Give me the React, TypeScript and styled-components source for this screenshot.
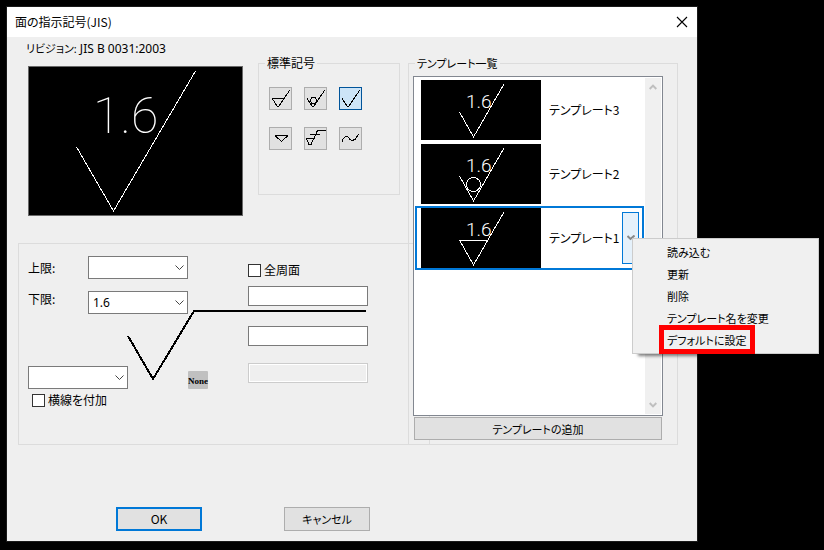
import React, { useState } from "react";
import styled, { createGlobalStyle } from "styled-components";

const Global = createGlobalStyle`
  * { box-sizing: border-box; }
  body {
    margin: 0;
    background: #000;
    color: #000;
    font-family: "Noto Sans CJK JP", sans-serif;
    font-size: 12px;
    line-height: 16px;
    font-feature-settings: "palt";
  }
  button, input, select { font: inherit; color: inherit; font-feature-settings: inherit; margin: 0; }
`;

const Page = styled.main`
  padding: 7px 127px 9px 7px;
`;

const Dialog = styled.section`
  background: #efefef;
  box-shadow: 0 0 0 1px #1a1a1a;
`;

const TitleBar = styled.header`
  display: flex;
  align-items: center;
  justify-content: space-between;
  height: 30px;
  padding: 0 7px 0 8px;
  background: #fff;
`;

const Title = styled.h1`
  margin: 0;
  font-size: 12px;
  font-weight: 400;
`;

const CloseButton = styled.button`
  display: grid;
  place-items: center;
  width: 16px;
  height: 16px;
  padding: 0;
  border: 0;
  background: none;
`;

const Body = styled.div`
  padding: 4px 19px 10px 11px;
`;

const Columns = styled.div`
  display: grid;
  grid-template-columns: minmax(0, 1fr) 270px;
`;

const MainColumn = styled.div`
  display: flex;
  flex-direction: column;
  gap: 27px;
`;

const TopRow = styled.div`
  display: flex;
  align-items: flex-start;
  justify-content: space-between;
  padding: 0 8px 0 10px;
`;

const PreviewBlock = styled.div`
  display: flex;
  flex-direction: column;
  gap: 9px;
`;

const Revision = styled.div`
  height: 16px;
  margin-left: -2px;
  font-family: "Noto Sans", "Noto Sans CJK JP", sans-serif;
`;

const RevisionName = styled.span`
  font-size: 11px;
`;

const Preview = styled.svg`
  display: block;
  width: 215px;
  height: 150px;
  background: #000;
  border: 1px solid #696969;
`;

const SymbolValue = styled.text<{ $small?: boolean }>`
  fill: #fff;
  font-family: Roboto, "Noto Sans CJK JP", sans-serif;
  font-size: ${(p) => (p.$small ? "19px" : "50px")};
  font-weight: ${(p) => (p.$small ? 300 : 100)};
`;

const Group = styled.fieldset`
  min-width: 0;
  margin: 14px 0 0;
  border: 1px solid #dcdcdc;
`;

const Legend = styled.legend<{ $small?: boolean }>`
  padding: 0 2px;
  font-size: ${(p) => (p.$small ? "11px" : "12px")};
`;

const SymbolGroup = styled(Group)`
  width: 142px;
  height: 140px;
  padding: 16px 10px;
  legend { margin-left: -4px; }
`;

const SymbolGrid = styled.div`
  display: grid;
  grid-template-columns: repeat(3, 23px);
  gap: 17px 12px;
`;

const IconButton = styled.button<{ $on: boolean }>`
  width: 23px;
  height: 23px;
  padding: 0;
  border: 1px solid ${(p) => (p.$on ? "#00549a" : "#adadad")};
  background: ${(p) => (p.$on ? "#cce4f7" : "#e1e1e1")};
  svg { display: block; }
`;

const ParamPanel = styled.section`
  display: grid;
  grid-template-columns: 220px 120px;
  margin-right: -22px;
  padding: 12px 9px 36px;
  border: 1px solid #dcdcdc;
`;

const LeftFields = styled.div`
  grid-area: 1 / 1;
  display: flex;
  flex-direction: column;
`;

const FieldRow = styled.div<{ $top?: boolean }>`
  display: flex;
  align-items: ${(p) => (p.$top ? "flex-start" : "center")};
  margin-bottom: 12px;
  label { width: 60px; }
`;

const EndRow = styled.div`
  display: flex;
  align-items: flex-end;
  gap: 60px;
  margin: 40px 0 3px;
`;

const Combo = styled.span`
  display: inline-grid;
  width: 100px;
  height: 23px;
  align-items: center;
  svg { grid-area: 1 / 1; justify-self: end; margin-right: 4px; pointer-events: none; }
`;

const Select = styled.select`
  grid-area: 1 / 1;
  appearance: none;
  width: 100%;
  height: 23px;
  padding: 0 20px 0 4px;
  border: 1px solid #7a7a7a;
  border-radius: 0;
  background: #fff;
  font-family: "Noto Sans", sans-serif;
`;

const NoneButton = styled.button`
  width: 20px;
  height: 18px;
  padding: 2px 0 0;
  border: 0;
  border-radius: 1px;
  background: #c0c0c0;
  font-family: "Liberation Serif", serif;
  font-size: 9px;
  font-weight: 700;
  line-height: 16px;
`;

const RightFields = styled.div`
  grid-area: 1 / 2;
  display: flex;
  flex-direction: column;
  padding-top: 6px;
`;

const CheckLabel = styled.label<{ $inset?: boolean }>`
  display: flex;
  align-items: center;
  gap: 3px;
  padding-left: ${(p) => (p.$inset ? "4px" : "0")};
`;

const Check = styled.input`
  appearance: none;
  width: 13px;
  height: 13px;
  border: 1px solid #333;
  background: #fff;
  &:checked { background: #333; box-shadow: inset 0 0 0 2px #fff; }
`;

const TextBox = styled.input<{ $gap: number }>`
  width: 120px;
  height: 20px;
  margin-top: ${(p) => p.$gap}px;
  padding: 0 3px;
  border: 1px solid #7a7a7a;
  background: #fff;
  &:disabled {
    border-color: #ccc;
    background: #efefef;
    box-shadow: inset 0 0 0 1px #fff;
  }
`;

const SurfaceMark = styled.svg`
  grid-area: 1 / 1 / 2 / 3;
  margin: 53px 0 0 99px;
  pointer-events: none;
`;

const TemplateGroup = styled(Group)`
  display: flex;
  flex-direction: column;
  padding: 5px 14px 4px 4px;
  legend { margin-left: 2px; line-height: 16px; }
`;

const ListBox = styled.div`
  display: flex;
  flex: 1;
  padding: 1px;
  border: 1px solid #828790;
  background: #fff;
`;

const Rows = styled.ul`
  flex: 1;
  min-width: 0;
  margin: 0;
  padding: 0;
  list-style: none;
`;

const Row = styled.li<{ $on: boolean }>`
  display: flex;
  align-items: center;
  padding: 0 3px 0 4px;
  border: 2px solid ${(p) => (p.$on ? "#0078d7" : "transparent")};
`;

const Thumb = styled.svg`
  display: block;
  flex: none;
  width: 120px;
  height: 60px;
  margin-right: 8px;
  background: #000;
`;

const RowName = styled.span`
  flex: 1;
  min-width: 0;
  white-space: nowrap;
`;

const MenuAnchor = styled.div`
  position: relative;
  width: 17px;
`;

const DropButton = styled.button`
  display: grid;
  place-items: center;
  width: 17px;
  height: 52px;
  padding: 0;
  border: 1px solid #0078d7;
  background: #e5f1fb;
`;

const Menu = styled.div`
  position: absolute;
  left: 10px;
  top: 26px;
  z-index: 2;
  width: 187px;
  padding: 2px;
  border: 1px solid #ccc;
  background: #f0f0f0;
  box-shadow: 4px 4px 3px -2px rgba(0, 0, 0, 0.5);
`;

const MenuItem = styled.button`
  display: block;
  width: 100%;
  height: 22px;
  padding: 0 0 0 32px;
  border: 0;
  background: none;
  font-size: 11px;
  text-align: left;
  white-space: nowrap;
`;

const Highlight = styled.span`
  position: absolute;
  left: 26px;
  bottom: -1px;
  width: 96px;
  height: 29px;
  border: 5px solid #f00;
  pointer-events: none;
`;

const ScrollBar = styled.div`
  display: flex;
  flex: none;
  flex-direction: column;
  align-items: center;
  justify-content: space-between;
  width: 16px;
  margin-left: 1px;
  padding: 6px 0;
  background: #f0f0f0;
`;

const PushButton = styled.button<{ $default?: boolean }>`
  width: 86px;
  height: 24px;
  padding: 0;
  border: ${(p) => (p.$default ? "2px solid #0078d7" : "1px solid #adadad")};
  background: #e1e1e1;
  font-size: ${(p) => (p.$default ? "12px" : "11px")};
`;

const AddButton = styled(PushButton)`
  width: auto;
  height: 23px;
  margin: 1px 1px 0;
`;

const Footer = styled.footer`
  display: flex;
  gap: 82px;
  padding: 62px 0 0 98px;
`;

const Chevron = () => (
  <svg width="9" height="6" viewBox="0 0 9 6" fill="none" stroke="#444">
    <path d="M0.5 0.5L4.5 4.5L8.5 0.5" />
  </svg>
);

const ScrollArrow = ({ up }: { up?: boolean }) => (
  <svg width="8" height="6" viewBox="0 0 8 6" fill="none" stroke="#bfbfbf" strokeWidth="2">
    <path d={up ? "M0.7 5L4 1.6L7.3 5" : "M0.7 1L4 4.4L7.3 1"} />
  </svg>
);

const symbols = [
  { name: "除去加工あり", d: "M3 11.5H15M3.5 12L8 19H10L20.5 3.5" },
  { name: "除去加工なし", d: "M3 11.5L8 19H10L20.5 3.5M6.5 12.5L8 10.5H11L12.5 12.5V14.5L11 16.5H8L6.5 14.5Z" },
  { name: "基本記号", d: "M3 11.5L8 19H10L20.5 3.5" },
  { name: "三角記号", d: "M6 8.5H19M6.5 9L12.5 14.5L18.5 9" },
  { name: "旧記号", d: "M2 11.5H11M2.5 12L5 17.5H7L13.5 3.5H22M6 7.5H16" },
  { name: "波形記号", d: "M3.5 14.5V12.5L6.5 9.5H8.5L11 12.5L13 13.5L16 12.5L19.5 7.5" },
];

const templates = [
  { name: "テンプレート3", kind: "plain" },
  { name: "テンプレート2", kind: "circle" },
  { name: "テンプレート1", kind: "bar" },
];

const menuEntries = ["読み込む", "更新", "削除", "テンプレート名を変更", "デフォルトに設定"];

function ComboBox({ id, value, label }: { id: string; value: string; label?: string }) {
  return (
    <Combo>
      <Select id={id} aria-label={label} defaultValue={value}>
        <option value=""></option>
        <option value="1.6">1.6</option>
      </Select>
      <Chevron />
    </Combo>
  );
}

export default function App() {
  const [symbol, setSymbol] = useState(2);
  return (
    <>
      <Global />
      <Page>
        <Dialog role="dialog" aria-labelledby="dialog-title">
          <TitleBar>
            <Title id="dialog-title">面の指示記号(JIS)</Title>
            <CloseButton aria-label="閉じる">
              <svg width="12" height="12" viewBox="0 0 12 12" stroke="#000" strokeWidth="1.1">
                <path d="M1 1L11 11M11 1L1 11" />
              </svg>
            </CloseButton>
          </TitleBar>
          <Body>
            <Columns>
              <MainColumn>
                <TopRow>
                  <PreviewBlock>
                    <Revision>
                      <RevisionName>リビジョン:</RevisionName> JIS B 0031:2003
                    </Revision>
                    <Preview viewBox="0 0 213 148">
                      <path
                        d="M47.5 80L84.5 144L166.5 4"
                        fill="none"
                        stroke="#fff"
                        shapeRendering="crispEdges"
                      />
                      <SymbolValue x="64" y="66">1.6</SymbolValue>
                    </Preview>
                  </PreviewBlock>
                  <SymbolGroup>
                    <Legend>標準記号</Legend>
                    <SymbolGrid>
                      {symbols.map((s, i) => (
                        <IconButton
                          key={s.name}
                          $on={i === symbol}
                          aria-label={s.name}
                          aria-pressed={i === symbol}
                          onClick={() => setSymbol(i)}
                        >
                          <svg
                            width="21"
                            height="21"
                            viewBox="1 1 21 21"
                            fill="none"
                            stroke="#000"
                            shapeRendering="crispEdges"
                          >
                            <path d={s.d} />
                          </svg>
                        </IconButton>
                      ))}
                    </SymbolGrid>
                  </SymbolGroup>
                </TopRow>
                <ParamPanel>
                  <LeftFields>
                    <FieldRow>
                      <label htmlFor="upper">上限:</label>
                      <ComboBox id="upper" value="" />
                    </FieldRow>
                    <FieldRow $top>
                      <label htmlFor="lower">下限:</label>
                      <ComboBox id="lower" value="1.6" />
                    </FieldRow>
                    <EndRow>
                      <ComboBox id="method" value="" label="加工方法" />
                      <NoneButton>None</NoneButton>
                    </EndRow>
                    <CheckLabel $inset>
                      <Check type="checkbox" />
                      横線を付加
                    </CheckLabel>
                  </LeftFields>
                  <RightFields>
                    <CheckLabel>
                      <Check type="checkbox" />
                      全周面
                    </CheckLabel>
                    <TextBox $gap={8} aria-label="加工方法の指示" />
                    <TextBox $gap={20} aria-label="基準長さ" />
                    <TextBox $gap={17} aria-label="追加指示" disabled />
                  </RightFields>
                  <SurfaceMark width="240" height="74" viewBox="0 0 240 74" fill="none" stroke="#000" strokeWidth="2">
                    <path d="M1 27L26 70L67 2H239" shapeRendering="crispEdges" />
                  </SurfaceMark>
                </ParamPanel>
              </MainColumn>
              <TemplateGroup>
                <Legend $small>テンプレート一覧</Legend>
                <ListBox>
                  <Rows>
                    {templates.map((t) => (
                      <Row key={t.name} $on={t.kind === "bar"}>
                        <Thumb viewBox="0 0 120 60">
                          <g fill="none" stroke="#fff" shapeRendering="crispEdges">
                            <path d="M38.5 32L52.5 57L83 4" />
                            {t.kind === "circle" && <circle cx="52.5" cy="40.5" r="7" />}
                            {t.kind === "bar" && <path d="M38.5 32.5H66.5" />}
                          </g>
                          <SymbolValue $small x="45" y="28">1.6</SymbolValue>
                        </Thumb>
                        <RowName>{t.name}</RowName>
                        {t.kind === "bar" && (
                          <MenuAnchor>
                            <DropButton aria-label="メニュー" aria-haspopup="menu">
                              <svg width="8" height="6" viewBox="0 0 8 6" fill="none" stroke="#888" strokeWidth="2">
                                <path d="M0.5 1L3.5 4L7.5 0.5" />
                              </svg>
                            </DropButton>
                            <Menu role="menu">
                              {menuEntries.map((m) => (
                                <MenuItem key={m} role="menuitem">{m}</MenuItem>
                              ))}
                              <Highlight />
                            </Menu>
                          </MenuAnchor>
                        )}
                      </Row>
                    ))}
                  </Rows>
                  <ScrollBar>
                    <ScrollArrow up />
                    <ScrollArrow />
                  </ScrollBar>
                </ListBox>
                <AddButton>テンプレートの追加</AddButton>
              </TemplateGroup>
            </Columns>
            <Footer>
              <PushButton $default>OK</PushButton>
              <PushButton>キャンセル</PushButton>
            </Footer>
          </Body>
        </Dialog>
      </Page>
    </>
  );
}
